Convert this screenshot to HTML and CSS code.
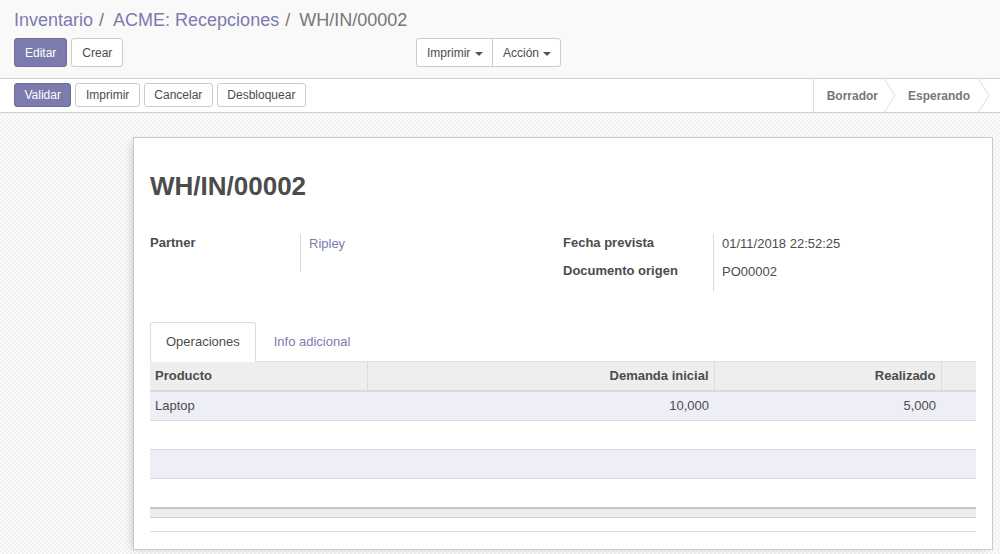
FILE: index.html
```html
<!DOCTYPE html>
<html lang="es">
<head>
<meta charset="utf-8">
<title>WH/IN/00002</title>
<link rel="stylesheet" href="styles.css">
</head>
<body>
<div class="control-panel">
  <ol class="breadcrumb">
    <li><a class="crumb-link">Inventario</a><span class="sep">/</span></li>
    <li><a class="crumb-link">ACME: Recepciones</a><span class="sep">/</span></li>
    <li class="active">WH/IN/00002</li>
  </ol>
  <div class="cp-row">
    <div class="cp-buttons">
      <button class="btn btn-primary">Editar</button>
      <button class="btn">Crear</button>
    </div>
    <div class="btn-group">
      <button class="btn">Imprimir <span class="caret"></span></button>
      <button class="btn">Acción <span class="caret"></span></button>
    </div>
  </div>
</div>
<div class="statusbar">
  <div class="sb-buttons">
    <button class="btn btn-sm btn-primary">Validar</button>
    <button class="btn btn-sm">Imprimir</button>
    <button class="btn btn-sm">Cancelar</button>
    <button class="btn btn-sm">Desbloquear</button>
  </div>
  <div class="sb-status">
    <div class="step first"><span>Borrador</span><svg class="chev" width="12" height="33" viewBox="0 0 12 33"><polyline points="0.5,0 11,16.5 0.5,33" fill="none" stroke="#dcdcdc" stroke-width="1"/></svg></div>
    <div class="step"><span>Esperando</span><svg class="chev" width="12" height="33" viewBox="0 0 12 33"><polyline points="0.5,0 11,16.5 0.5,33" fill="none" stroke="#dcdcdc" stroke-width="1"/></svg></div>
  </div>
</div>
<div class="content">
  <div class="sheet">
    <h1 class="title">WH/IN/00002</h1>
    <div class="groups">
      <div class="group">
        <div class="field-row tall">
          <div class="label">Partner</div>
          <div class="value link">Ripley</div>
        </div>
      </div>
      <div class="group">
        <div class="field-row">
          <div class="label">Fecha prevista</div>
          <div class="value">01/11/2018 22:52:25</div>
        </div>
        <div class="field-row">
          <div class="label">Documento origen</div>
          <div class="value">PO00002</div>
        </div>
      </div>
    </div>
    <ul class="tabs">
      <li class="tab active">Operaciones</li>
      <li class="tab">Info adicional</li>
    </ul>
    <table class="list">
      <colgroup>
        <col class="c1"><col class="c2"><col class="c3"><col class="c4">
      </colgroup>
      <thead>
        <tr><th>Producto</th><th class="num">Demanda inicial</th><th class="num">Realizado</th><th></th></tr>
      </thead>
      <tbody>
        <tr class="odd"><td>Laptop</td><td class="num">10,000</td><td class="num">5,000</td><td></td></tr>
        <tr><td>&nbsp;</td><td></td><td></td><td></td></tr>
        <tr class="odd"><td>&nbsp;</td><td></td><td></td><td></td></tr>
        <tr class="last"><td>&nbsp;</td><td></td><td></td><td></td></tr>
      </tbody>
      <tfoot>
        <tr><td></td><td></td><td></td><td></td></tr>
      </tfoot>
    </table>
    <div class="bottom-rule"></div>
  </div>
</div>
</body>
</html>
```

FILE: styles.css
```css
* { box-sizing: border-box; }

html, body {
  margin: 0;
  height: 100%;
}

body {
  font-family: "Liberation Sans", Arial, Helvetica, sans-serif;
  font-size: 13px;
  line-height: 18px;
  color: #4c4c4c;
  background: #f9f9f9 repeating-conic-gradient(#f1f1f1 0 25%, #fbfbfb 0 50%) 0 0 / 4px 4px;
  overflow: hidden;
}

/* ---------- control panel ---------- */
.control-panel {
  background: #f9f9f9;
  border-bottom: 1px solid #cfcfcf;
  padding: 7px 14px 11px;
}

.breadcrumb {
  list-style: none;
  margin: 0;
  padding: 0;
  display: flex;
  font-size: 18px;
  line-height: 26px;
  height: 26px;
}

.breadcrumb li { white-space: nowrap; }

.crumb-link { color: #7c7bad; }

.sep {
  color: #777;
  padding: 0 9px 0 6px;
}

.breadcrumb .active { color: #777; }

.cp-row {
  margin-top: 5px;
  display: flex;
  justify-content: space-between;
  width: 547px;
}

.cp-buttons {
  display: flex;
  gap: 4px;
}

.btn {
  font-family: inherit;
  font-size: 12px;
  line-height: 18px;
  padding: 5px 10px;
  height: 29px;
  border: 1px solid #ccc;
  border-radius: 3px;
  background: #fff;
  color: #4c4c4c;
  cursor: pointer;
  white-space: nowrap;
}

.btn-primary {
  background: #7c7bad;
  border-color: #6e6d9e;
  color: #fff;
}

.btn-group {
  display: flex;
}

.btn-group .btn:first-child {
  border-top-right-radius: 0;
  border-bottom-right-radius: 0;
  width: 77px;
}

.btn-group .btn:last-child {
  border-top-left-radius: 0;
  border-bottom-left-radius: 0;
  margin-left: -1px;
  width: 69px;
}

.caret {
  display: inline-block;
  width: 0;
  height: 0;
  margin-left: 1px;
  vertical-align: middle;
  border-top: 4px solid #555;
  border-left: 4px solid transparent;
  border-right: 4px solid transparent;
}

/* ---------- status bar ---------- */
.statusbar {
  display: flex;
  justify-content: space-between;
  background: #fff;
  border-bottom: 1px solid #cfcfcf;
  height: 34px;
}

.sb-buttons {
  display: flex;
  gap: 4px;
  padding: 4px 14px 0;
}

.btn-sm {
  height: 24px;
  padding: 2px 9.5px;
  line-height: 18px;
}

.sb-status {
  display: flex;
  border-left: 1px solid #dcdcdc;
  margin-right: 10px;
}

.step {
  display: flex;
  align-items: center;
  font-size: 12px;
  font-weight: bold;
  color: #777;
}

.step span { padding: 0 6px 0 13px; }

.step + .step span { padding-left: 12px; padding-right: 8px; }

.chev { display: block; }

/* ---------- content ---------- */
.content {
  padding: 24px 0 0 133px;
}

.sheet {
  width: 860px;
  background: #fff;
  border: 1px solid #c9c9d3;
  box-shadow: -4px 2px 8px -3px rgba(0, 0, 0, 0.18);
  padding: 34px 16px 17px;
}

.title {
  margin: 0;
  font-size: 26px;
  line-height: 28.6px;
  font-weight: bold;
  color: #4c4c4c;
}

.groups {
  display: flex;
  margin-top: 33px;
}

.group {
  width: 413px;
}

.field-row {
  display: flex;
  height: 28px;
}

.field-row.tall { height: 38px; }

.group:last-child .field-row:last-child { height: 29px; }

.label {
  width: 150px;
  font-weight: bold;
}

.value {
  border-left: 1px solid #d9d9d9;
  padding-left: 8px;
  padding-top: 1px;
  flex: 1;
}

.link { color: #7c7bad; }

/* ---------- tabs ---------- */
.tabs {
  list-style: none;
  margin: 31px 0 0;
  padding: 0;
  display: flex;
  border-bottom: 1px solid #e2e2e2;
}

.tab {
  padding: 10px 15px;
  line-height: 18px;
  border: 1px solid transparent;
  border-bottom: 0;
  border-radius: 3px 3px 0 0;
  margin-right: 2px;
  margin-bottom: -1px;
  color: #7c7bad;
  background: transparent;
}

.tab.active {
  border-color: #dcdcdc;
  background: #fff;
  color: #4c4c4c;
  padding-bottom: 11px;
}

/* ---------- list ---------- */
.list {
  width: 100%;
  border-collapse: collapse;
  table-layout: fixed;
}

.c1 { width: 217px; }
.c2 { width: 347px; }
.c3 { width: 227px; }
.c4 { width: 35px; }

.list th {
  background: #eee;
  font-weight: bold;
  text-align: left;
  padding: 5px 5px;
  height: 28px;
  line-height: 18px;
  border-left: 1px solid #dcdcdc;
  border-bottom: 2px solid #d9d9d9;
}

.list th:first-child { border-left: 0; }

.list td {
  padding: 5px 5px;
  height: 29px;
  line-height: 18px;
  border-bottom: 1px solid #dcdcdc;
}

.list tbody tr.odd td { background: #eeeef6; }

.list tbody tr.last td { border-bottom: 0; height: 28px; }

.list .num { text-align: right; }

.list tfoot td {
  height: 10px;
  padding: 0;
  background: #eee;
  border-top: 2px solid #c6c6c6;
  border-bottom: 1px solid #cfcfcf;
}

.bottom-rule {
  margin-top: 13px;
  border-top: 1px solid #dcdcdc;
}
```
